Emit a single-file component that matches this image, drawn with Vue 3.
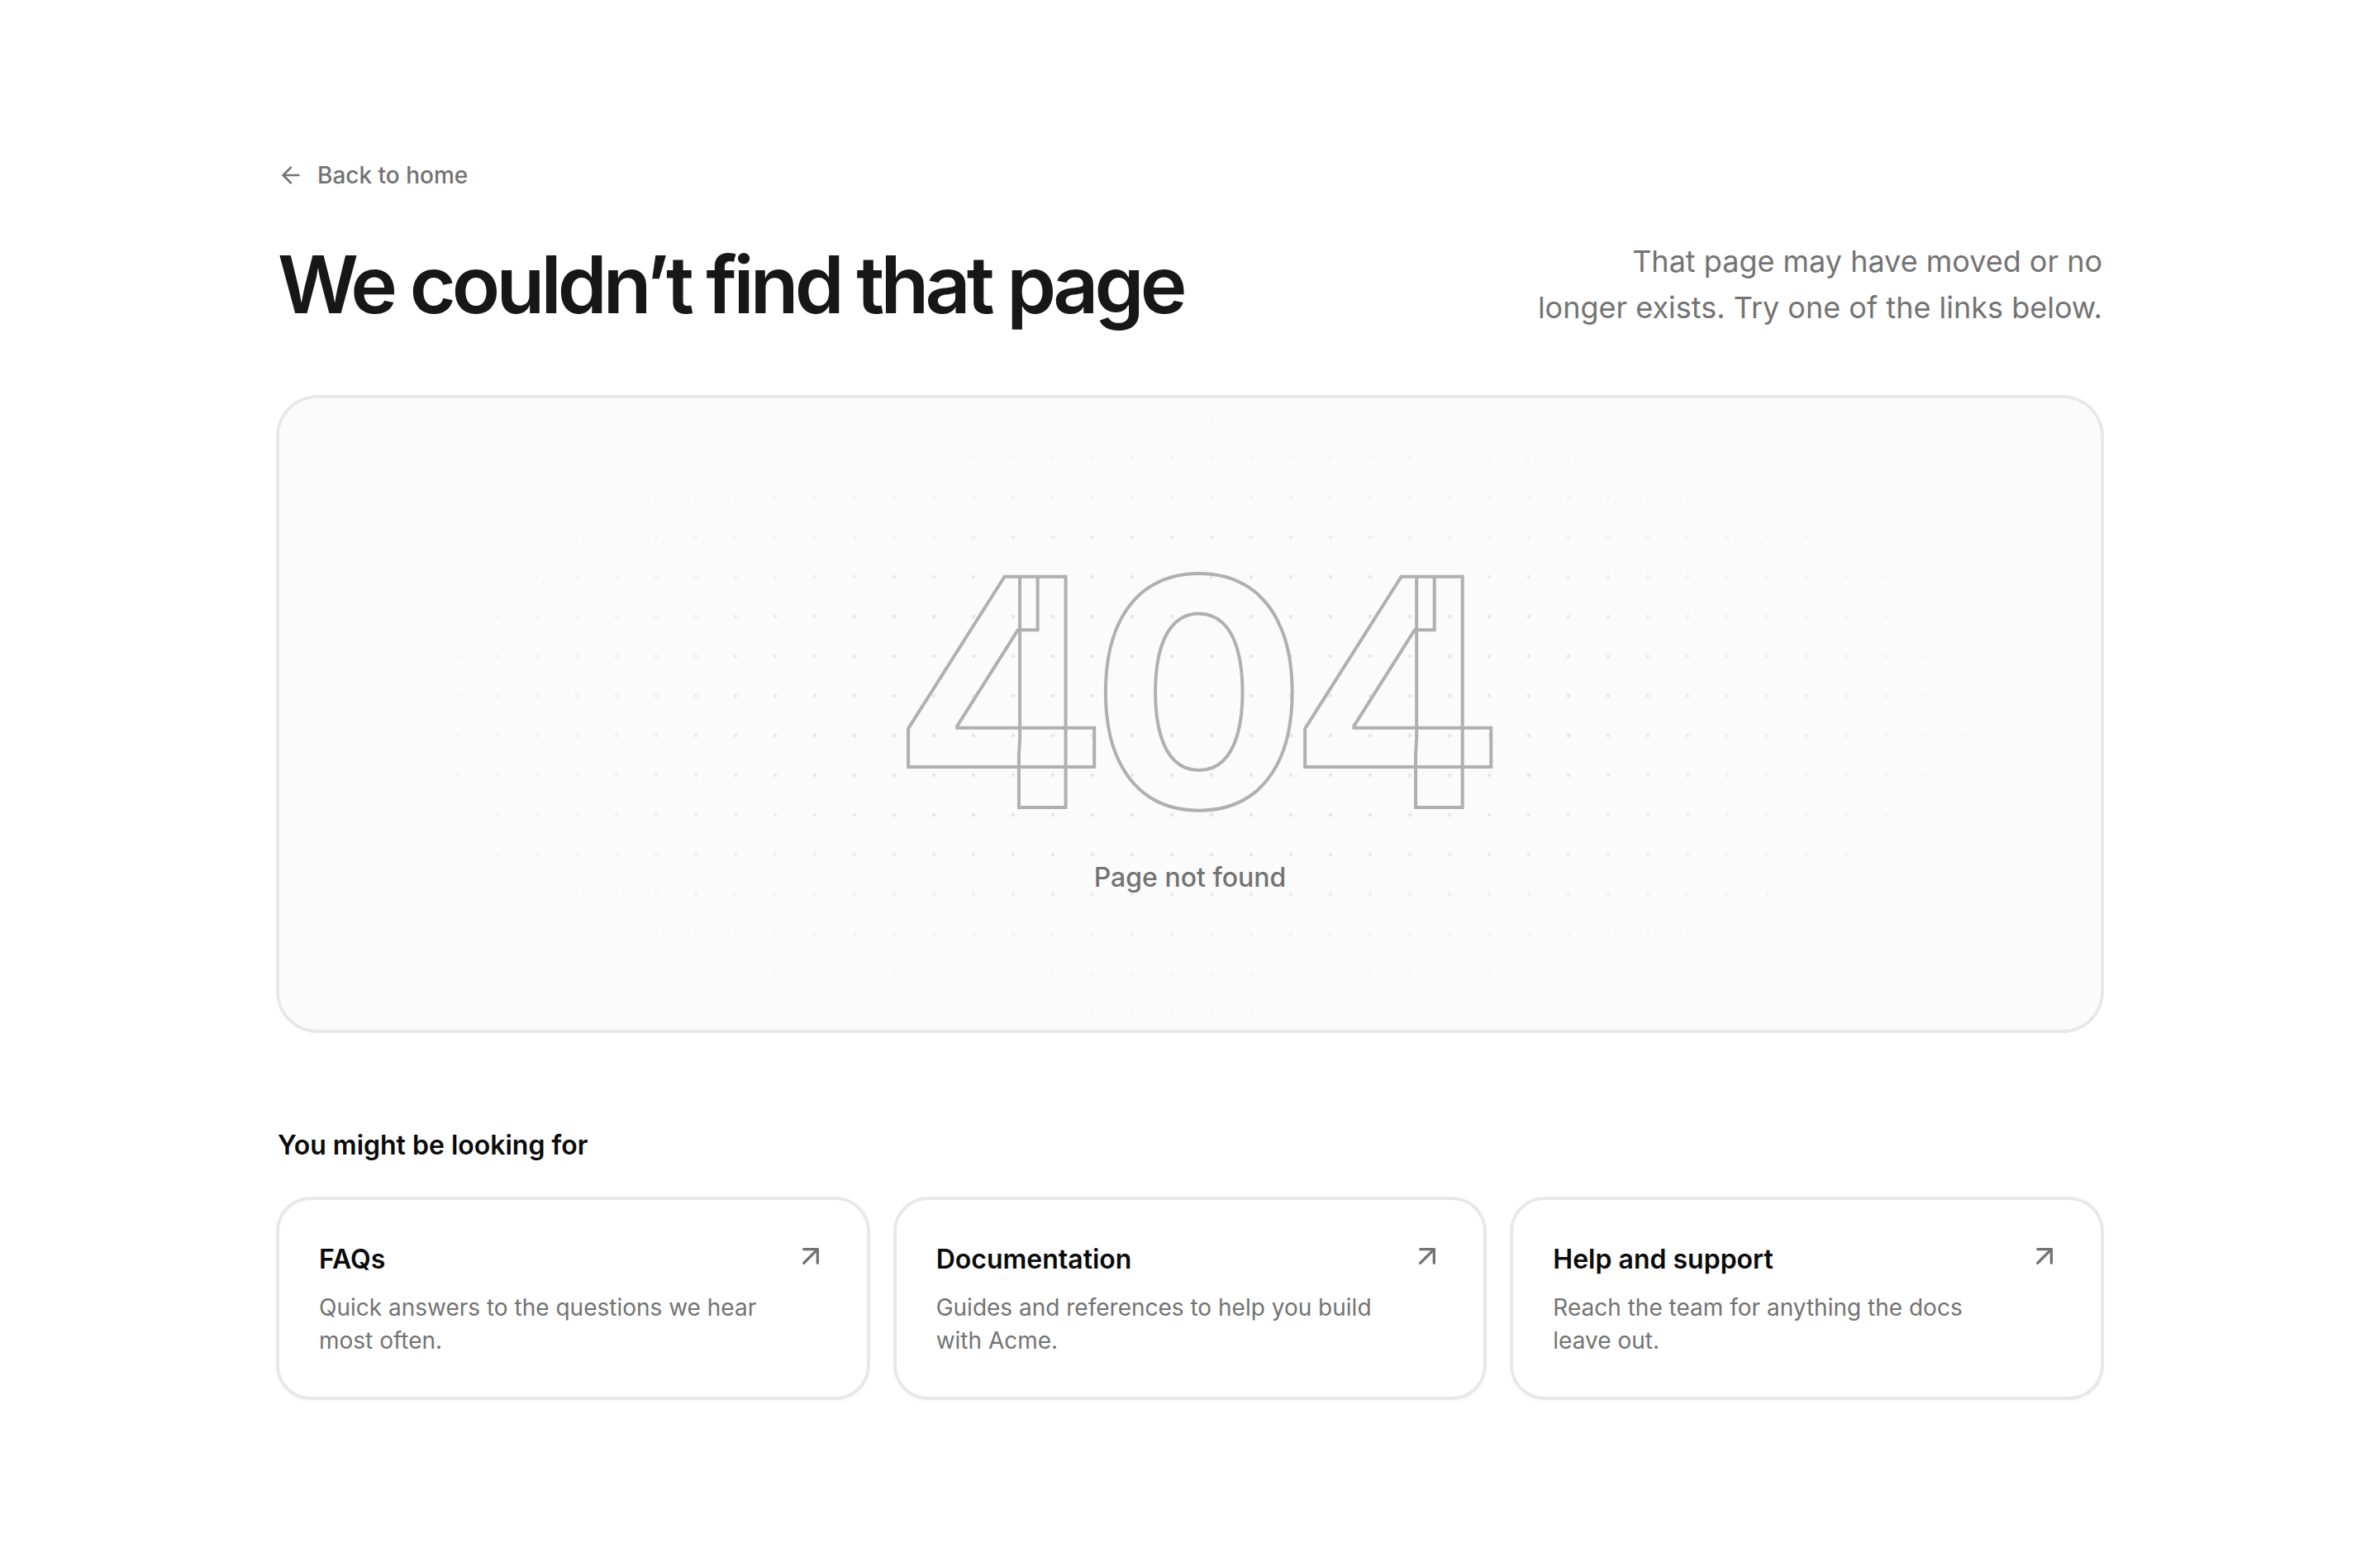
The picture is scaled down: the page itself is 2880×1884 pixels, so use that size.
<template>
	<main class="page">
		<a class="back" href="#">
			<svg class="icon" viewBox="0 0 24 24" fill="none" stroke="currentColor" stroke-width="2" stroke-linecap="round" stroke-linejoin="round">
				<path d="m12 19-7-7 7-7" />
				<path d="M19 12H5" />
			</svg>
			Back to home
		</a>

		<header class="head">
			<h1>We couldn’t find that page</h1>
			<p class="lede">That page may have moved or no longer exists. Try one of the links below.</p>
		</header>

		<!-- 404 hero -->
		<section class="hero">
			<div class="dots"></div>
			<div class="code">404</div>
			<p class="caption">Page not found</p>
		</section>

		<h2>You might be looking for</h2>
		<div class="links">
			<a v-for="link in links" :key="link.title" class="card" href="#">
				<div class="card-text">
					<h3>{{ link.title }}</h3>
					<p>{{ link.desc }}</p>
				</div>
				<svg class="icon icon-lg" viewBox="0 0 24 24" fill="none" stroke="currentColor" stroke-width="2" stroke-linecap="round" stroke-linejoin="round">
					<path d="M7 7h10v10" />
					<path d="M7 17 17 7" />
				</svg>
			</a>
		</div>
	</main>
</template>

<script setup>
const links = [
	{ title: 'FAQs', desc: 'Quick answers to the questions we hear most often.' },
	{ title: 'Documentation', desc: 'Guides and references to help you build with Acme.' },
	{ title: 'Help and support', desc: 'Reach the team for anything the docs leave out.' },
]
</script>

<style>
html,
body {
	background: #fff;
}
</style>

<style scoped>
.page {
	width: 2208px;
	margin: 0 auto;
	padding: 192px 0;
	font-family: Inter, "Liberation Sans", sans-serif;
	color: #171717;
}

.icon {
	width: 32px;
	height: 32px;
	flex: none;
}

.icon-lg {
	width: 40px;
	height: 40px;
}

.back {
	display: inline-flex;
	align-items: center;
	gap: 16px;
	font-size: 28px;
	line-height: 40px;
	font-weight: 500;
	color: #737373;
	text-decoration: none;
}

.head {
	display: flex;
	justify-content: space-between;
	align-items: flex-end;
	margin-top: 56px;
}

h1 {
	margin: 0;
	font-size: 96px;
	line-height: 112px;
	font-weight: 600;
	letter-spacing: -0.05em;
	color: #171717;
}

.lede {
	margin: 0;
	width: 720px;
	font-size: 36px;
	line-height: 56px;
	text-align: right;
	text-wrap: balance;
	color: #737373;
}

.hero {
	position: relative;
	display: flex;
	flex-direction: column;
	align-items: center;
	justify-content: center;
	gap: 8px;
	height: 768px;
	margin-top: 80px;
	padding-top: 4px;
	box-sizing: border-box;
	border: 2px solid #e8e8e8;
	border-radius: 48px;
	box-shadow: 0 0 0 2px #e8e8e8;
	background: #fbfbfb;
}

.dots {
	position: absolute;
	inset: 0;
	background-image: radial-gradient(circle at center, #e8e8e8 2px, transparent 2.75px);
	background-size: 48px 48px;
	-webkit-mask-image: radial-gradient(ellipse at center, #000 30%, transparent 70%);
	mask-image: radial-gradient(ellipse at center, #000 30%, transparent 70%);
}

.code {
	position: relative;
	margin-left: 12px;
	font-family: "Inter Variable", "Inter Tight", Inter, sans-serif;
	font-size: 384px;
	line-height: 1;
	font-weight: 700;
	letter-spacing: -0.025em;
	color: transparent;
	-webkit-text-stroke: 4px #b0b0b0;
}

.caption {
	position: relative;
	margin: 0;
	font-size: 32px;
	line-height: 48px;
	font-weight: 500;
	color: #737373;
}

h2 {
	margin: 114px 0 0;
	font-size: 32px;
	line-height: 48px;
	font-weight: 600;
	color: #0a0a0a;
}

.links {
	display: grid;
	grid-template-columns: repeat(3, 1fr);
	gap: 32px;
	margin-top: 40px;
}

.card {
	display: flex;
	justify-content: space-between;
	gap: 16px;
	padding: 48px;
	border: 2px solid #e8e8e8;
	border-radius: 40px;
	box-shadow: 0 0 0 2px #e8e8e8, 0 2px 6px rgba(0, 0, 0, 0.05);
	background: #fff;
	color: #737373;
	text-decoration: none;
}

h3 {
	margin: 0;
	font-size: 32px;
	line-height: 48px;
	font-weight: 600;
	color: #0a0a0a;
}

.card p {
	margin: 14px 0 0;
	font-size: 28px;
	line-height: 40px;
	color: #737373;
}
</style>
